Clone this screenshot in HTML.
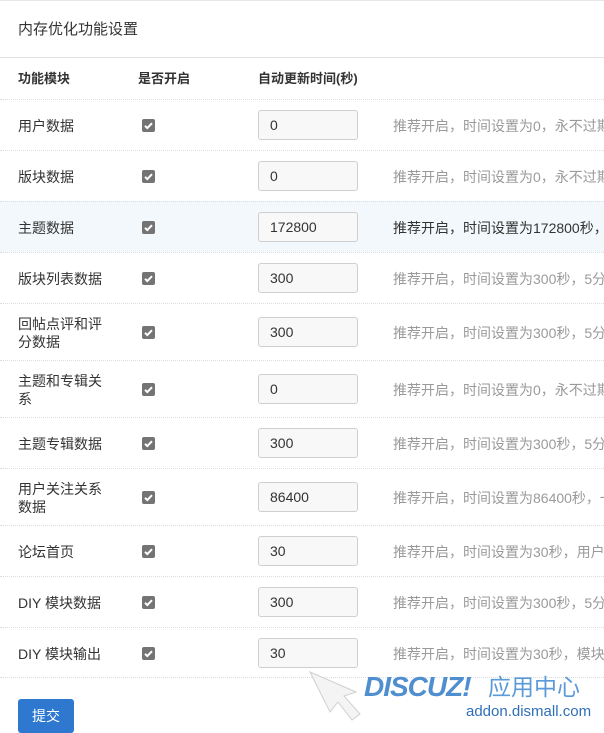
<!DOCTYPE html>
<html><head><meta charset="utf-8"><style>
*{margin:0;padding:0;box-sizing:border-box}
body{width:604px;height:728px;overflow:hidden;background:#fff;font-family:"Liberation Sans","Noto Sans CJK SC",sans-serif;font-size:14px;color:#333;position:relative}
.top{position:absolute;left:0;top:0;width:604px;height:1px;background:#e6e6e6}
.title{position:absolute;left:18px;top:20px;font-size:15px;line-height:20px}
.hl{position:absolute;left:0;top:57px;width:604px;height:1px;background:#e2e2e2}
.th{position:absolute;top:70px;font-weight:bold;font-size:13px;line-height:18px}
.row{position:absolute;left:0;width:604px;border-top:1px dotted #d6dde3}
.lab{position:absolute;left:18px;width:90px;top:50%;transform:translateY(-50%);margin-top:1px;line-height:18px;font-size:14px}
.cb{position:absolute;left:142px;top:50%;margin-top:-6px;width:13px;height:13px;background:#747474;border-radius:2px}
.cb svg{position:absolute;left:0;top:0}
.inp{position:absolute;left:258px;top:50%;margin-top:-15px;width:100px;height:30px;border:1px solid #cfcfcf;border-radius:3px;background:#f8f8f8;padding-left:11px;line-height:28px;font-size:14px}
.hint{position:absolute;left:393px;top:50%;transform:translateY(-50%);margin-top:1px;white-space:nowrap;color:#9a9a9a;font-size:14px;line-height:18px}
.hi{background:#f2f8fb}
.hi .hint{color:#333}
.btn{position:absolute;left:18px;top:699px;width:56px;height:34px;background:#2e79cf;border-radius:3px;color:#fff;font-size:14px;text-align:center;line-height:34px}
.wm{position:absolute;left:308px;top:670px;width:296px;height:58px}
</style></head><body>
<div class="top"></div>
<div class="title">内存优化功能设置</div>
<div class="hl"></div>
<div class="th" style="left:18px">功能模块</div>
<div class="th" style="left:138px">是否开启</div>
<div class="th" style="left:258px">自动更新时间(秒)</div>

<div class="row" style="top:99px;height:51px"><div class="lab">用户数据</div><div class="cb"><svg width="13" height="13"><path d="M3 6.8l2.3 2.3L10 4.2" stroke="#fff" stroke-width="2" fill="none"/></svg></div><div class="inp">0</div><div class="hint">推荐开启，时间设置为0，永不过期</div></div>
<div class="row" style="top:150px;height:51px"><div class="lab">版块数据</div><div class="cb"><svg width="13" height="13"><path d="M3 6.8l2.3 2.3L10 4.2" stroke="#fff" stroke-width="2" fill="none"/></svg></div><div class="inp">0</div><div class="hint">推荐开启，时间设置为0，永不过期</div></div>
<div class="row hi" style="top:201px;height:51px"><div class="lab">主题数据</div><div class="cb"><svg width="13" height="13"><path d="M3 6.8l2.3 2.3L10 4.2" stroke="#fff" stroke-width="2" fill="none"/></svg></div><div class="inp">172800</div><div class="hint">推荐开启，时间设置为172800秒，</div></div>
<div class="row" style="top:252px;height:51px"><div class="lab">版块列表数据</div><div class="cb"><svg width="13" height="13"><path d="M3 6.8l2.3 2.3L10 4.2" stroke="#fff" stroke-width="2" fill="none"/></svg></div><div class="inp">300</div><div class="hint">推荐开启，时间设置为300秒，5分钟</div></div>
<div class="row" style="top:303px;height:57px"><div class="lab">回帖点评和评分数据</div><div class="cb"><svg width="13" height="13"><path d="M3 6.8l2.3 2.3L10 4.2" stroke="#fff" stroke-width="2" fill="none"/></svg></div><div class="inp">300</div><div class="hint">推荐开启，时间设置为300秒，5分钟</div></div>
<div class="row" style="top:360px;height:57px"><div class="lab">主题和专辑关系</div><div class="cb"><svg width="13" height="13"><path d="M3 6.8l2.3 2.3L10 4.2" stroke="#fff" stroke-width="2" fill="none"/></svg></div><div class="inp">0</div><div class="hint">推荐开启，时间设置为0，永不过期</div></div>
<div class="row" style="top:417px;height:51px"><div class="lab">主题专辑数据</div><div class="cb"><svg width="13" height="13"><path d="M3 6.8l2.3 2.3L10 4.2" stroke="#fff" stroke-width="2" fill="none"/></svg></div><div class="inp">300</div><div class="hint">推荐开启，时间设置为300秒，5分钟</div></div>
<div class="row" style="top:468px;height:57px"><div class="lab">用户关注关系数据</div><div class="cb"><svg width="13" height="13"><path d="M3 6.8l2.3 2.3L10 4.2" stroke="#fff" stroke-width="2" fill="none"/></svg></div><div class="inp">86400</div><div class="hint">推荐开启，时间设置为86400秒，一天</div></div>
<div class="row" style="top:525px;height:51px"><div class="lab">论坛首页</div><div class="cb"><svg width="13" height="13"><path d="M3 6.8l2.3 2.3L10 4.2" stroke="#fff" stroke-width="2" fill="none"/></svg></div><div class="inp">30</div><div class="hint">推荐开启，时间设置为30秒，用户</div></div>
<div class="row" style="top:576px;height:51px"><div class="lab">DIY 模块数据</div><div class="cb"><svg width="13" height="13"><path d="M3 6.8l2.3 2.3L10 4.2" stroke="#fff" stroke-width="2" fill="none"/></svg></div><div class="inp">300</div><div class="hint">推荐开启，时间设置为300秒，5分钟</div></div>
<div class="row" style="top:627px;height:51px;border-bottom:1px dotted #d6dde3"><div class="lab">DIY 模块输出</div><div class="cb"><svg width="13" height="13"><path d="M3 6.8l2.3 2.3L10 4.2" stroke="#fff" stroke-width="2" fill="none"/></svg></div><div class="inp">30</div><div class="hint">推荐开启，时间设置为30秒，模块</div></div>

<div class="btn">提交</div>
<svg class="wm" width="296" height="58" viewBox="0 0 296 58">
<path d="M2 2 L48 22 L36 26 L52 44 L44 50 L30 32 L22 42 Z" fill="#f4f4f4" stroke="#d0d0d0" stroke-width="1"/>
<text x="56" y="26" font-family="Liberation Sans, sans-serif" font-size="28" font-weight="bold" font-style="italic" fill="#4f8fd0" letter-spacing="-1">DISCUZ!</text>
<text x="180" y="25" font-family="Noto Sans CJK SC, sans-serif" font-size="23" fill="#5b9ad8">应用中心</text>
<text x="158" y="46" font-family="Liberation Sans, sans-serif" font-size="15" fill="#2f6fb8">addon.dismall.com</text>
</svg>
</body></html>
